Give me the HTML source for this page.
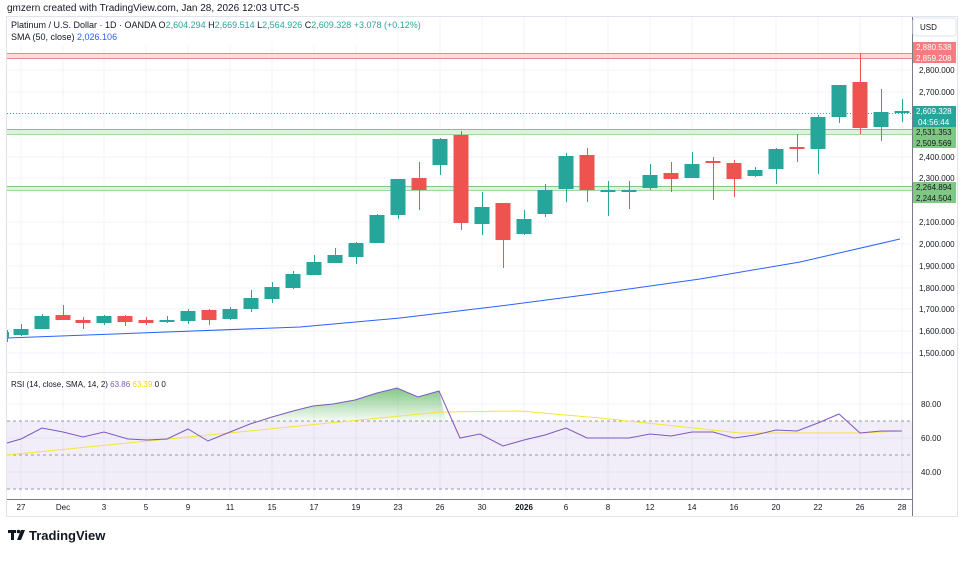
<!DOCTYPE html>
<html><head><meta charset="utf-8"><style>
body{margin:0;background:#fff;width:964px;height:556px;overflow:hidden;font-family:"Liberation Sans",sans-serif}
svg text{font-family:"Liberation Sans",sans-serif}
</style></head><body>
<svg width="964" height="556" viewBox="0 0 964 556" xmlns="http://www.w3.org/2000/svg">
<text x="7" y="11" font-size="10" fill="#131722">gmzern created with TradingView.com, Jan 28, 2026 12:03 UTC-5</text>
<rect x="6.5" y="16.5" width="951" height="500" fill="none" stroke="#e0e3eb"/>
<!-- grid -->
<g stroke="#f0f3fa" stroke-width="1">
<line x1="21" y1="17" x2="21" y2="499"/><line x1="63" y1="17" x2="63" y2="499"/><line x1="104" y1="17" x2="104" y2="499"/><line x1="146" y1="17" x2="146" y2="499"/><line x1="188" y1="17" x2="188" y2="499"/><line x1="230" y1="17" x2="230" y2="499"/><line x1="272" y1="17" x2="272" y2="499"/><line x1="314" y1="17" x2="314" y2="499"/><line x1="356" y1="17" x2="356" y2="499"/><line x1="398" y1="17" x2="398" y2="499"/><line x1="440" y1="17" x2="440" y2="499"/><line x1="482" y1="17" x2="482" y2="499"/><line x1="524" y1="17" x2="524" y2="499"/><line x1="566" y1="17" x2="566" y2="499"/><line x1="608" y1="17" x2="608" y2="499"/><line x1="650" y1="17" x2="650" y2="499"/><line x1="692" y1="17" x2="692" y2="499"/><line x1="734" y1="17" x2="734" y2="499"/><line x1="776" y1="17" x2="776" y2="499"/><line x1="818" y1="17" x2="818" y2="499"/><line x1="860" y1="17" x2="860" y2="499"/><line x1="902" y1="17" x2="902" y2="499"/>
<line x1="7" y1="70" x2="912" y2="70"/><line x1="7" y1="92" x2="912" y2="92"/><line x1="7" y1="157" x2="912" y2="157"/><line x1="7" y1="178" x2="912" y2="178"/><line x1="7" y1="222" x2="912" y2="222"/><line x1="7" y1="244" x2="912" y2="244"/><line x1="7" y1="266" x2="912" y2="266"/><line x1="7" y1="288" x2="912" y2="288"/><line x1="7" y1="309" x2="912" y2="309"/><line x1="7" y1="331" x2="912" y2="331"/><line x1="7" y1="353" x2="912" y2="353"/>
<line x1="7" y1="404" x2="912" y2="404"/><line x1="7" y1="438" x2="912" y2="438"/><line x1="7" y1="472" x2="912" y2="472"/>
</g>
<line x1="7" y1="372.5" x2="912" y2="372.5" stroke="#e0e3eb"/>
<!-- bands -->
<rect x="7" y="53" width="905" height="6" fill="#fbdcdc"/>
<line x1="7" y1="53.5" x2="912" y2="53.5" stroke="#f08a8a"/><line x1="7" y1="58.5" x2="912" y2="58.5" stroke="#f08a8a"/>
<rect x="7" y="129" width="905" height="5" fill="#dff0dc"/>
<line x1="7" y1="129.5" x2="912" y2="129.5" stroke="#81c784"/><line x1="7" y1="134.5" x2="912" y2="134.5" stroke="#a5d6a7"/>
<rect x="7" y="186" width="905" height="5" fill="#dff0dc"/>
<line x1="7" y1="186.5" x2="912" y2="186.5" stroke="#81c784"/><line x1="7" y1="190.5" x2="912" y2="190.5" stroke="#a5d6a7"/>
<line x1="7" y1="113.5" x2="912" y2="113.5" stroke="#26a69a" stroke-dasharray="1 2"/>
<!-- SMA -->
<path d="M7 338 L140 333 L300 327 L400 318 L500 306 L600 293 L700 279 L800 262 L900 239" fill="none" stroke="#2962ff" stroke-width="1"/>
<!-- candles -->
<g id="c"></g>
<!-- legend -->
<rect x="7" y="18" width="370" height="28" fill="#fff" opacity="0.8"/>
<text x="11" y="28" font-size="9" fill="#131722">Platinum / U.S. Dollar · 1D · OANDA <tspan fill="#131722">O</tspan><tspan fill="#26a69a">2,604.294</tspan> H<tspan fill="#26a69a">2,669.514</tspan> L<tspan fill="#26a69a">2,564.926</tspan> C<tspan fill="#26a69a">2,609.328 +3.078 (+0.12%)</tspan></text>
<text x="11" y="40" font-size="9" fill="#131722">SMA (50, close) <tspan fill="#2962ff">2,026.106</tspan></text>
<!-- RSI -->
<rect x="7" y="421" width="905" height="68" fill="#7e57c2" opacity="0.1"/>
<g stroke="#9598a1" stroke-dasharray="3 3"><line x1="7" y1="421" x2="912" y2="421"/><line x1="7" y1="455" x2="912" y2="455"/><line x1="7" y1="489" x2="912" y2="489"/></g>
<defs><linearGradient id="gg" x1="0" y1="0" x2="0" y2="1"><stop offset="0" stop-color="#4caf50" stop-opacity="0.7"/><stop offset="1" stop-color="#4caf50" stop-opacity="0.05"/></linearGradient></defs>
<path d="M255 421 L272 417 L293 411 L313 406 L333 404 L355 400 L377 393 L397 388 L418 397 L439 391 L446 421 Z" fill="url(#gg)"/>
<path d="M7 455 L440 412 L520 411 L600 418 L740 433 L860 433 L902 431" fill="none" stroke="#f5e633" stroke-width="1"/>
<path d="M7 443 L21 439 L42 428 L63 432 L83 437 L104 432 L128 439 L147 440 L167 439 L188 429 L208 441 L230 432 L250 424 L272 417 L293 411 L313 406 L333 404 L355 400 L377 393 L397 388 L418 397 L439 391 L460 438 L480 434 L503 446 L524 440 L545 435 L566 428 L587 438 L608 438 L629 438 L650 434 L671 436 L692 432 L713 432 L734 438 L755 435 L776 430 L797 431 L818 423 L839 414 L860 433 L881 431 L902 431" fill="none" stroke="#7e57c2" stroke-width="1"/>
<text x="11" y="387" font-size="8" fill="#131722">RSI (14, close, SMA, 14, 2) <tspan fill="#7e57c2">63.86</tspan> <tspan fill="#f5d90a">63.39</tspan> 0 0</text>
<!-- axes -->
<line x1="912.5" y1="17" x2="912.5" y2="516" stroke="#787b86"/>
<line x1="7" y1="499.5" x2="912" y2="499.5" stroke="#787b86"/>
<g font-size="8" fill="#131722">
<text x="919" y="73">2,800.000</text><text x="919" y="95">2,700.000</text><text x="919" y="160">2,400.000</text><text x="919" y="181">2,300.000</text><text x="919" y="225">2,100.000</text><text x="919" y="247">2,000.000</text><text x="919" y="269">1,900.000</text><text x="919" y="291">1,800.000</text><text x="919" y="312">1,700.000</text><text x="919" y="334">1,600.000</text><text x="919" y="356">1,500.000</text>
<text x="921" y="407">80.00</text><text x="921" y="441">60.00</text><text x="921" y="475">40.00</text>
</g>
<rect x="913" y="18" width="43" height="18" rx="3" fill="#fff" stroke="#e0e3eb"/>
<text x="920" y="30" font-size="8" fill="#131722">USD</text>
<rect x="913" y="42" width="43" height="21" fill="#f77c80"/>
<text x="916" y="50" font-size="8" fill="#fff">2,880.538</text><text x="916" y="61" font-size="8" fill="#fff">2,859.208</text>
<rect x="913" y="106" width="43" height="21" fill="#26a69a"/>
<text x="916" y="114" font-size="8" fill="#fff">2,609.328</text><text x="918" y="125" font-size="8" fill="#fff">04:56:44</text>
<rect x="913" y="127" width="43" height="21" fill="#81c784"/>
<text x="916" y="135" font-size="8" fill="#131722">2,531.353</text><text x="916" y="146" font-size="8" fill="#131722">2,509.569</text>
<rect x="913" y="182" width="43" height="21" fill="#81c784"/>
<text x="916" y="190" font-size="8" fill="#131722">2,264.894</text><text x="916" y="201" font-size="8" fill="#131722">2,244.504</text>
<g font-size="8" fill="#131722" text-anchor="middle">
<text x="21" y="510">27</text><text x="63" y="510">Dec</text><text x="104" y="510">3</text><text x="146" y="510">5</text><text x="188" y="510">9</text><text x="230" y="510">11</text><text x="272" y="510">15</text><text x="314" y="510">17</text><text x="356" y="510">19</text><text x="398" y="510">23</text><text x="440" y="510">26</text><text x="482" y="510">30</text><text x="524" y="510" font-weight="bold">2026</text><text x="566" y="510">6</text><text x="608" y="510">8</text><text x="650" y="510">12</text><text x="692" y="510">14</text><text x="734" y="510">16</text><text x="776" y="510">20</text><text x="818" y="510">22</text><text x="860" y="510">26</text><text x="902" y="510">28</text>
</g>
<!-- logo -->
<g fill="#131722"><rect x="8" y="530" width="8" height="3"/><rect x="11" y="530" width="3" height="10"/><circle cx="18.5" cy="531.5" r="1.8"/><path d="M21 530 H25 L21 540 H17 Z"/></g>
<text x="29" y="540" font-size="13" font-weight="bold" fill="#131722">TradingView</text>
</svg>
<script>
var d=[[7,'g',332,338,330,342],[21,'g',329,335,324,336],[42,'g',316,329,314,329],[63,'r',315,320,305,320],[83,'r',320,323,317,329],[104,'g',316,323,315,325],[125,'r',316,322,315,326],[146,'r',320,323,317,325],[167,'g',320,322,316,323],[188,'g',311,321,309,324],[209,'r',310,320,309,325],[230,'g',309,319,307,320],[251,'g',298,309,290,312],[272,'g',287,299,282,303],[293,'g',274,288,271,289],[314,'g',262,275,255,275],[335,'g',255,263,248,263],[356,'g',243,257,242,264],[377,'g',215,243,214,243],[398,'g',179,215,179,219],[419,'r',178,190,162,210],[440,'g',139,165,138,175],[461,'r',135,223,131,230],[482,'g',207,224,192,235],[503,'r',203,240,203,268],[524,'g',219,234,210,235],[545,'g',190,214,184,217],[566,'g',156,189,153,202],[587,'r',155,190,148,202],[608,'g',190,192,181,216],[629,'g',190,192,181,209],[650,'g',175,188,164,190],[671,'r',173,179,162,192],[692,'g',164,178,152,178],[713,'r',161,163,157,200],[734,'r',163,179,160,197],[755,'g',170,176,167,177],[776,'g',149,169,148,184],[797,'r',147,149,134,162],[818,'g',117,149,115,174],[839,'g',85,117,85,123],[860,'r',82,128,53,134],[881,'g',112,127,89,141],[902,'g',111,113,99,122]];
var s='';d.forEach(function(c){var col=c[1]=='g'?'#26a69a':'#ef5350';var x0=c[0]===7?7:c[0]-7.5;var w=c[0]===7?2:15;
s+='<line x1="'+(c[0]+0.5)+'" y1="'+c[4]+'" x2="'+(c[0]+0.5)+'" y2="'+c[5]+'" stroke="'+col+'"/>';
s+='<rect x="'+x0+'" y="'+c[2]+'" width="'+w+'" height="'+Math.max(1.5,c[3]-c[2])+'" fill="'+col+'"/>';});
document.getElementById('c').innerHTML=s;
</script>
</body></html>
